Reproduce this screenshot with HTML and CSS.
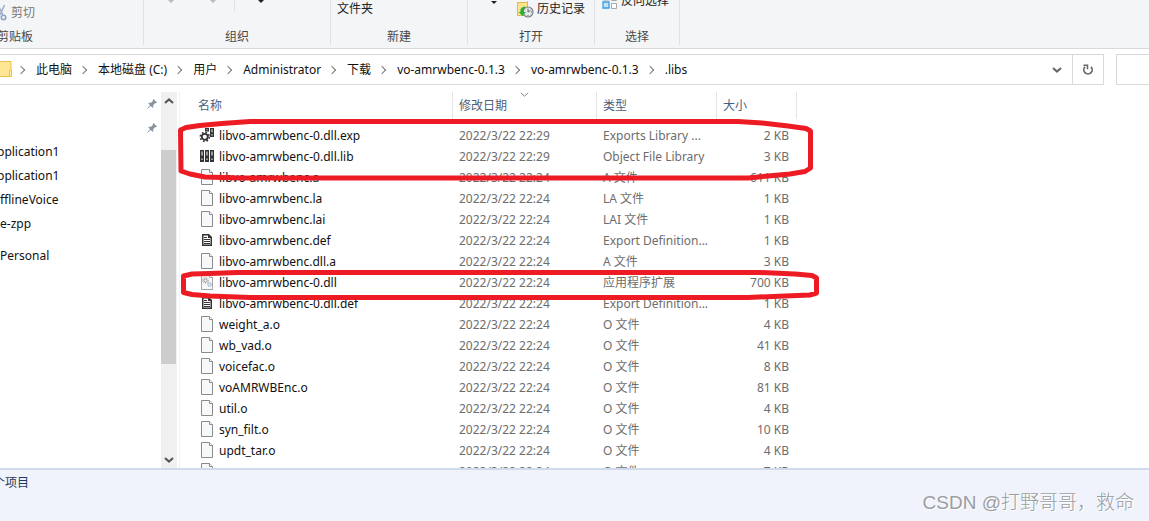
FILE: index.html
```html
<!DOCTYPE html>
<html lang="zh-CN">
<head>
<meta charset="utf-8">
<title>.libs</title>
<link rel="stylesheet" href="styles.css">
</head>
<body>
<svg class="defs" aria-hidden="true">
  <symbol id="down" viewBox="0 0 10 6"><path d="M1 1 5 4.600 9 1" fill="none" stroke="currentColor" stroke-width="2"/></symbol>
  <symbol id="pin" viewBox="0 0 12 12"><path d="M7.500 1 11 4.500 10 5.200 9.300 5 7.300 7 7.300 9 6.500 9.700 4.700 8 1 11.200.800 11 4 7.300 2.300 5.500 3 4.700 5 4.700 7 2.700 6.800 1.800Z" fill="#8a949e"/></symbol>
  <symbol id="page" viewBox="0 0 16 16"><path d="M2.500.500h8l3 3v12h-11z" fill="#f7f8f9" stroke="#8b8b8b"/><path d="M10.500.500v3h3" fill="#fff" stroke="#8b8b8b"/></symbol>
  <symbol id="def" viewBox="0 0 16 16"><path d="M3.500 2.500h6l3 3v8h-9z" fill="#fff"/><path d="M3 2h7l3 3v9H3zM4.500 3.500v9h7V6H9V3.500z" fill="#333" fill-rule="evenodd"/><path d="M5 5.500h3M5 7.500h6M5 9.500h6M5 11.500h6" fill="none" stroke="#333"/></symbol>
  <symbol id="dll" viewBox="0 0 16 16"><path d="M2.500.500h8l3 3v12h-11z" fill="#f7f8f9" stroke="#a5a5a5"/><path d="M10.500.500v3h3" fill="#fff" stroke="#a5a5a5"/><circle cx="6.500" cy="6.500" r="1.600" fill="#fff" stroke="#888"/><circle cx="6.500" cy="6.500" r="3" fill="none" stroke="#999" stroke-dasharray="1 1"/><circle cx="10.500" cy="10.500" r="1.700" fill="#e8f2fb" stroke="#8fb0cc"/></symbol>
  <symbol id="lib" viewBox="0 0 16 16"><path d="M1 2h4v12H1zM6 2h4v12H6zM11 2h4v12h-4z" fill="#333"/><path d="M2.500 3.500h1v4h-1zM7.500 3.500h1v4h-1zM12.500 3.500h1v4h-1zM2.500 10.500h1v1.500h-1zM7.500 10.500h1v1.500h-1zM12.500 10.500h1v1.500h-1z" fill="#fff"/></symbol>
  <symbol id="exp" viewBox="0 0 16 16"><circle cx="5.800" cy="9.800" r="3" fill="#fff" stroke="#333" stroke-width="1.800"/><circle cx="5.800" cy="9.800" r="4.500" fill="none" stroke="#333" stroke-width="1.600" stroke-dasharray="1.700 1.834"/><path d="M6 1h4v3.500H6zM11 1h4v9h-4z" fill="#333"/><path d="M7.500 2.200h1v1h-1zM12.500 2.200h1v3h-1zM12.500 7h1v1.500h-1z" fill="#fff"/></symbol>
</svg>

<div class="window">
  <header class="ribbon">
    <section class="group clipboard">
      <button class="tool cut"><svg width="8" height="16" viewBox="0 0 8 16"><path d="M-2 0 3 10M4.500 0 0 10" stroke="#9fadc4" stroke-width="1.500"/><circle cx="3.500" cy="12.500" r="2.200" fill="none" stroke="#8fa3c8" stroke-width="1.600"/></svg>剪切</button>
      <span class="label">剪贴板</span>
    </section>
    <section class="group organize">
      <div class="arrows"><i class="tri pale"></i><i class="tri pale"></i><i class="rule"></i><i class="tri"></i></div>
      <span class="label">组织</span>
    </section>
    <section class="group create">
      <button class="tool folder-tool">文件夹</button>
      <span class="label">新建</span>
    </section>
    <section class="group open">
      <div class="open-tools"><i class="tri"></i>
      <button class="tool"><svg width="17" height="17" viewBox="0 0 17 17"><path d="M.500 1.500h9l1-1v14H.500z" fill="#ffe28a" stroke="#e0b949"/><circle cx="11" cy="11" r="5" fill="#e5e8ea" stroke="#7c8184" stroke-width="1.200"/><path d="M11 7.500V11l2.500-1.500M11 14v1M14 11h1" fill="none" stroke="#62686c"/><path d="M8 5.500C4 6 3 8.500 3.500 11H1.500l4 4 3.500-4H7C6.500 8.500 7 7 8.500 6.500Z" fill="#27b13a"/></svg>历史记录</button></div>
      <span class="label">打开</span>
    </section>
    <section class="group select">
      <button class="tool invert"><svg width="16" height="16" viewBox="0 0 16 16"><path d="M1 1h6v6H1zM9.500 2.500h5v5h-5z" fill="#fff" stroke="#aaa"/><path d="M1 9h6v6H1z" fill="#bfe4fb" stroke="#3b9ce3" stroke-width="1.300"/><path d="M9.500 10.500h5v5h-5z" fill="#fff" stroke="#a8a8a8"/></svg>反向选择</button>
      <span class="label">选择</span>
    </section>
  </header>

  <div class="address-row">
    <nav class="address" aria-label="路径">
      <svg class="folder" width="12" height="17" viewBox="0 0 12 17"><path d="M-2 .500h13v15H-2z" fill="#ffe694" stroke="#e8c04a"/><path d="M9.500 9.500h2v6h-2z" fill="#ffeeb0" stroke="#e8c04a"/></svg>
      <ol class="crumbs">
        <li><a href="#">此电脑</a></li>
        <li><a href="#">本地磁盘 (C:)</a></li>
        <li><a href="#">用户</a></li>
        <li><a href="#">Administrator</a></li>
        <li><a href="#">下载</a></li>
        <li><a href="#">vo-amrwbenc-0.1.3</a></li>
        <li><a href="#">vo-amrwbenc-0.1.3</a></li>
        <li><a href="#">.libs</a></li>
      </ol>
      <button class="drop" aria-label="展开"><svg width="10" height="6"><use href="#down"/></svg></button>
      <button class="refresh" aria-label="刷新"><svg width="12" height="12" viewBox="0 0 12 12"><path d="M9 2.800A4.200 4.200 0 1 1 3 2.800" fill="none" stroke="#666" stroke-width="1.700"/><path d="M1.500 1.200H5.500V5.200" fill="none" stroke="#666" stroke-width="1.500"/></svg></button>
    </nav>
    <input class="search" type="search" aria-label="搜索">
  </div>

  <main class="body">
    <aside class="tree">
      <ul>
        <li class="pinned"><svg width="12" height="12"><use href="#pin"/></svg></li>
        <li class="pinned"><svg width="12" height="12"><use href="#pin"/></svg></li>
        <li><a href="#" class="scrolled">pplication1</a></li>
        <li><a href="#" class="scrolled">pplication1</a></li>
        <li><a href="#">fflineVoice</a></li>
        <li><a href="#">e-zpp</a></li>
        <li class="drive"><a href="#">Personal</a></li>
      </ul>
      <div class="scrollbar"><button aria-label="向上"><svg class="up" width="10" height="6"><use href="#down"/></svg></button><div class="track"><div class="thumb"></div></div><button aria-label="向下"><svg width="10" height="6"><use href="#down"/></svg></button></div>
    </aside>
    <div class="files">
      <table>
        <colgroup><col class="c-name"><col class="c-date"><col class="c-type"><col class="c-size"></colgroup>
        <thead><tr><th>名称</th><th>修改日期<svg class="sort" width="9" height="6" viewBox="0 0 9 6"><path d="M.800.800 4.500 4.200 8.200.800" fill="none" stroke="#888"/></svg></th><th>类型</th><th>大小</th></tr></thead>
        <tbody>
          <tr><td><svg><use href="#exp"/></svg>libvo-amrwbenc-0.dll.exp</td><td>2022/3/22 22:29</td><td>Exports Library ...</td><td>2 KB</td></tr>
          <tr><td><svg><use href="#lib"/></svg>libvo-amrwbenc-0.dll.lib</td><td>2022/3/22 22:29</td><td>Object File Library</td><td>3 KB</td></tr>
          <tr><td><svg><use href="#page"/></svg>libvo-amrwbenc.a</td><td>2022/3/22 22:24</td><td>A 文件</td><td>611 KB</td></tr>
          <tr><td><svg><use href="#page"/></svg>libvo-amrwbenc.la</td><td>2022/3/22 22:24</td><td>LA 文件</td><td>1 KB</td></tr>
          <tr><td><svg><use href="#page"/></svg>libvo-amrwbenc.lai</td><td>2022/3/22 22:24</td><td>LAI 文件</td><td>1 KB</td></tr>
          <tr><td><svg><use href="#def"/></svg>libvo-amrwbenc.def</td><td>2022/3/22 22:24</td><td>Export Definition...</td><td>1 KB</td></tr>
          <tr><td><svg><use href="#page"/></svg>libvo-amrwbenc.dll.a</td><td>2022/3/22 22:24</td><td>A 文件</td><td>3 KB</td></tr>
          <tr><td><svg><use href="#dll"/></svg>libvo-amrwbenc-0.dll</td><td>2022/3/22 22:24</td><td>应用程序扩展</td><td>700 KB</td></tr>
          <tr><td><svg><use href="#def"/></svg>libvo-amrwbenc-0.dll.def</td><td>2022/3/22 22:24</td><td>Export Definition...</td><td>1 KB</td></tr>
          <tr><td><svg><use href="#page"/></svg>weight_a.o</td><td>2022/3/22 22:24</td><td>O 文件</td><td>4 KB</td></tr>
          <tr><td><svg><use href="#page"/></svg>wb_vad.o</td><td>2022/3/22 22:24</td><td>O 文件</td><td>41 KB</td></tr>
          <tr><td><svg><use href="#page"/></svg>voicefac.o</td><td>2022/3/22 22:24</td><td>O 文件</td><td>8 KB</td></tr>
          <tr><td><svg><use href="#page"/></svg>voAMRWBEnc.o</td><td>2022/3/22 22:24</td><td>O 文件</td><td>81 KB</td></tr>
          <tr><td><svg><use href="#page"/></svg>util.o</td><td>2022/3/22 22:24</td><td>O 文件</td><td>4 KB</td></tr>
          <tr><td><svg><use href="#page"/></svg>syn_filt.o</td><td>2022/3/22 22:24</td><td>O 文件</td><td>10 KB</td></tr>
          <tr><td><svg><use href="#page"/></svg>updt_tar.o</td><td>2022/3/22 22:24</td><td>O 文件</td><td>4 KB</td></tr>
          <tr><td><svg><use href="#page"/></svg></td><td>2022/3/22 22:24</td><td>O 文件</td><td>7 KB</td></tr>
        </tbody>
      </table>
    </div>
    <svg class="marks" width="644" height="240" viewBox="176 92 644 240" aria-hidden="true">
      <path d="M180.500 130 186 127.500 200 125.500 222 123.500 250 121.500H738L762 123 788 126 806 128.500 810.500 131V168L805 171.500 790 174 768 176 748 178H240L205 177 190 174 181 171Z"/>
      <path d="M183.500 276 192 274 210 273.500 237 272.500H760L795 274 812 275.500 816.500 278V293L810 295 785 296 748 297.500H250L210 296 192 294.500 183.500 292.500Z"/>
    </svg>
  </main>

  <footer class="status"><span class="count">个项目</span><span class="credit">CSDN @打野哥哥，救命</span></footer>
</div>
</body>
</html>
```
FILE: styles.css
```css
* { box-sizing: border-box; }
body {
  margin: 0;
  font: 12px/21px "Noto Sans", "Noto Sans CJK SC", sans-serif;
  color: #111;
  background: #fff;
}
button { font: inherit; color: inherit; background: none; border: 0; padding: 0; }
a { color: inherit; text-decoration: none; }
ul, ol { list-style: none; margin: 0; padding: 0; }
.defs { display: none; }
.window { display: flex; flex-direction: column; height: 100vh; overflow: hidden; }

.ribbon {
  display: flex;
  flex: none;
  height: 49px;
  padding-bottom: 3px;
  background: #f4f5f7;
  border-bottom: 1px solid #d8d9da;
}
.group {
  display: flex;
  flex-direction: column;
  justify-content: flex-end;
  border-right: 1px solid #dfe1e4;
}
.label { align-self: center; line-height: 17px; color: #484848; }
.tool { display: flex; align-items: center; gap: 3px; white-space: nowrap; line-height: 20px; color: #222; }
.tool svg { flex: none; }
.clipboard { width: 144px; }
.clipboard .label { align-self: flex-start; margin-left: -3px; }
.cut { color: #777; margin-bottom: 5px; }
.organize { width: 187px; justify-content: space-between; }
.arrows { display: flex; padding-left: 24px; }
.tri { border: 3px solid transparent; border-top: 3px solid #222; border-bottom: 0; height: 3px; }
.pale { border-top-color: #bbb; margin-right: 36px; }
.rule { width: 1px; height: 11px; margin: 0 23px 0 -18px; background: #dfe1e4; }
.create { width: 137px; }
.folder-tool { margin: 0 0 9px 6px; }
.open { width: 127px; }
.open-tools { display: flex; padding-left: 23px; margin-bottom: 9px; gap: 20px; }
.open .tri { margin-top: 2px; }
.select { width: 85px; }
.invert { margin: 0 0 17px 7px; }

.address-row { display: flex; flex: none; gap: 12px; padding-top: 5px; }
.address {
  display: flex;
  align-items: center;
  flex: 1;
  height: 31px;
  border: 1px solid #d9d9d9;
  border-left: 0;
}
.crumbs { display: flex; flex: 1; white-space: nowrap; margin-left: -2px; }
.crumbs li { display: flex; align-items: center; }
.crumbs li::before {
  content: "";
  width: 5px;
  height: 5px;
  margin: 0 12px 0 8px;
  border: solid #777;
  border-width: 1px 1px 0 0;
  transform: rotate(45deg);
}
.drop { width: 30px; color: #666; }
.refresh { width: 31px; align-self: stretch; border-left: 1px solid #d9d9d9; }
.drop svg, .refresh svg { display: block; margin: auto; }
.search { width: 33px; height: 31px; border: 1px solid #d9d9d9; border-right: 0; padding: 0; appearance: none; }

.body { position: relative; display: flex; flex: 1; min-height: 0; padding-top: 7px; }
.tree { display: flex; width: 180px; flex: none; border-right: 1px solid #f2f2f2; }
.tree ul { flex: 1; min-width: 0; }
.tree li { height: 24px; line-height: 24px; white-space: nowrap; }
.tree .pinned { display: flex; justify-content: flex-end; align-items: center; padding-right: 3px; }
.scrolled { margin-left: -3px; }
.tree .drive { margin-top: 8px; }
.scrollbar { display: flex; flex-direction: column; width: 16px; margin-right: 2px; background: #f0f0f0; color: #555; }
.scrollbar button { height: 17px; flex: none; line-height: 0; }
.up { transform: rotate(180deg); }
.track { flex: 1; padding-top: 41px; }
.thumb { height: 71%; width: 15px; background: #cdcdcd; }

.files { flex: 1; min-width: 0; overflow: hidden; }
table { table-layout: fixed; width: 617px; border-collapse: separate; border-spacing: 0; }
.c-name { width: 273px; }
.c-date { width: 144px; }
.c-type { width: 120px; }
.c-size { width: 80px; }
th {
  position: relative;
  height: 27px;
  padding: 0 6px;
  text-align: left;
  font-weight: 400;
  color: #4c607a;
  border-right: 1px solid #e5e5e5;
}
th:first-child { padding-left: 18px; }
thead::after { content: ""; display: block; height: 6px; }
.sort { position: absolute; left: 67px; top: 0; }
td { height: 21px; padding: 0 6px; white-space: nowrap; color: #6d6d6d; }
td:first-child { display: flex; align-items: center; gap: 4px; padding-left: 19px; color: #111; }
td:last-child { text-align: right; padding-right: 8px; }
td svg { width: 16px; height: 16px; flex: none; margin-bottom: 2px; }
.marks { position: absolute; left: 176px; top: 7px; pointer-events: none; }
.marks path { fill: none; stroke: #ed1c24; stroke-width: 5; stroke-linejoin: round; }

.status {
  display: flex;
  justify-content: space-between;
  flex: none;
  height: 53px;
  padding: 2px 15px 0 0;
  background: #f0f3fb;
  border-top: 2px solid #cfdbeb;
  color: #1e395b;
}
.count { margin-left: -7px; }
.credit { align-self: flex-end; margin-bottom: 5px; font: 19px/26px "Liberation Sans", "Noto Sans CJK SC", sans-serif; font-weight: 300; color: #9b9da2; text-shadow: 1px 1px 0 #fff; }
```
